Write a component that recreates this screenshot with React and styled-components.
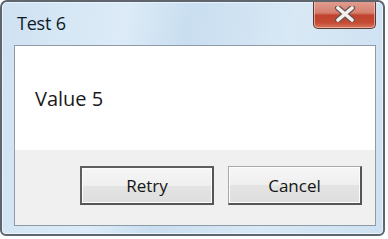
import React from "react";
import styled, { createGlobalStyle } from "styled-components";

const Global = createGlobalStyle`
  html, body { margin: 0; padding: 0; background: #ffffff; }
  body { font-family: "Open Sans", "Noto Sans", sans-serif; }
`;

const Window = styled.div`
  box-sizing: border-box;
  width: 385px;
  height: 236px;
  border: 2px solid #5f656c;
  border-radius: 7px 7px 6px 6px;
  background: linear-gradient(100deg, #cfe2f2 0%, #dcebf7 30%, #c9def0 45%, #d8e8f5 70%, #cde1f1 100%);
  display: flex;
  flex-direction: column;
  box-shadow: inset 0 0 0 1px #eaf3fb;
  overflow: hidden;
`;

const TitleBar = styled.div`
  height: 43px;
  display: flex;
  align-items: flex-start;
  justify-content: space-between;
  padding-left: 15px;
  padding-right: 7px;
`;

const Title = styled.div`
  margin-top: 9px;
  font-size: 18px;
  color: #0c1a2a;
  letter-spacing: -0.2px;
`;

const CloseButton = styled.div`
  box-sizing: border-box;
  margin-top: -2px;
  width: 63px;
  height: 29px;
  border: 1px solid #5a3a36;
  border-top: none;
  border-radius: 0 0 5px 5px;
  background: linear-gradient(180deg, #e3a194 0%, #d6806f 45%, #c0432f 55%, #c44a33 80%, #d8755c 100%);
  box-shadow: inset 0 0 0 1px rgba(255, 220, 210, 0.55);
  display: flex;
  align-items: center;
  justify-content: center;
`;

const Panel = styled.div`
  box-sizing: border-box;
  margin-left: 12px;
  width: 362px;
  height: 181px;
  border: 1px solid #8e9aa6;
  display: flex;
  flex-direction: column;
`;

const Body = styled.div`
  height: 104px;
  background: #ffffff;
  display: flex;
  align-items: center;
  padding-left: 20px;
  padding-top: 1px;
  box-sizing: border-box;
`;

const Message = styled.div`
  font-size: 20px;
  color: #1a1a1a;
`;

const Footer = styled.div`
  flex: 1;
  background: #f0f0f0;
  display: flex;
  justify-content: flex-end;
  align-items: flex-start;
  gap: 14px;
  padding-top: 16px;
  padding-right: 13px;
`;

const Button = styled.div`
  box-sizing: border-box;
  width: 134px;
  height: 39px;
  border: ${(p) => (p.$default ? "2px solid #5e5e5e" : "1px solid #a8a8a8")};
  border-right-color: #555555;
  border-bottom-color: #555555;
  border-right-width: 2px;
  border-bottom-width: 2px;
  background: linear-gradient(180deg, #f6f6f6 0%, #efefef 50%, #e4e4e4 51%, #dedede 100%);
  box-shadow: inset 0 0 0 1px #fcfcfc;
  display: flex;
  align-items: center;
  justify-content: center;
  font-size: 17px;
  color: #151515;
`;

const CloseIcon = () => (
  <svg width="22" height="16" viewBox="0 0 22 16">
    <path
      d="M4 2 L18 14 M18 2 L4 14"
      stroke="#6a5250"
      strokeWidth="6"
      strokeLinecap="round"
    />
    <path
      d="M4 2 L18 14 M18 2 L4 14"
      stroke="#f4f0ef"
      strokeWidth="3.6"
      strokeLinecap="round"
    />
  </svg>
);

export default function App() {
  return (
    <>
      <Global />
      <Window>
        <TitleBar>
          <Title>Test 6</Title>
          <CloseButton>
            <CloseIcon />
          </CloseButton>
        </TitleBar>
        <Panel>
          <Body>
            <Message>Value 5</Message>
          </Body>
          <Footer>
            <Button $default>Retry</Button>
            <Button>Cancel</Button>
          </Footer>
        </Panel>
      </Window>
    </>
  );
}
